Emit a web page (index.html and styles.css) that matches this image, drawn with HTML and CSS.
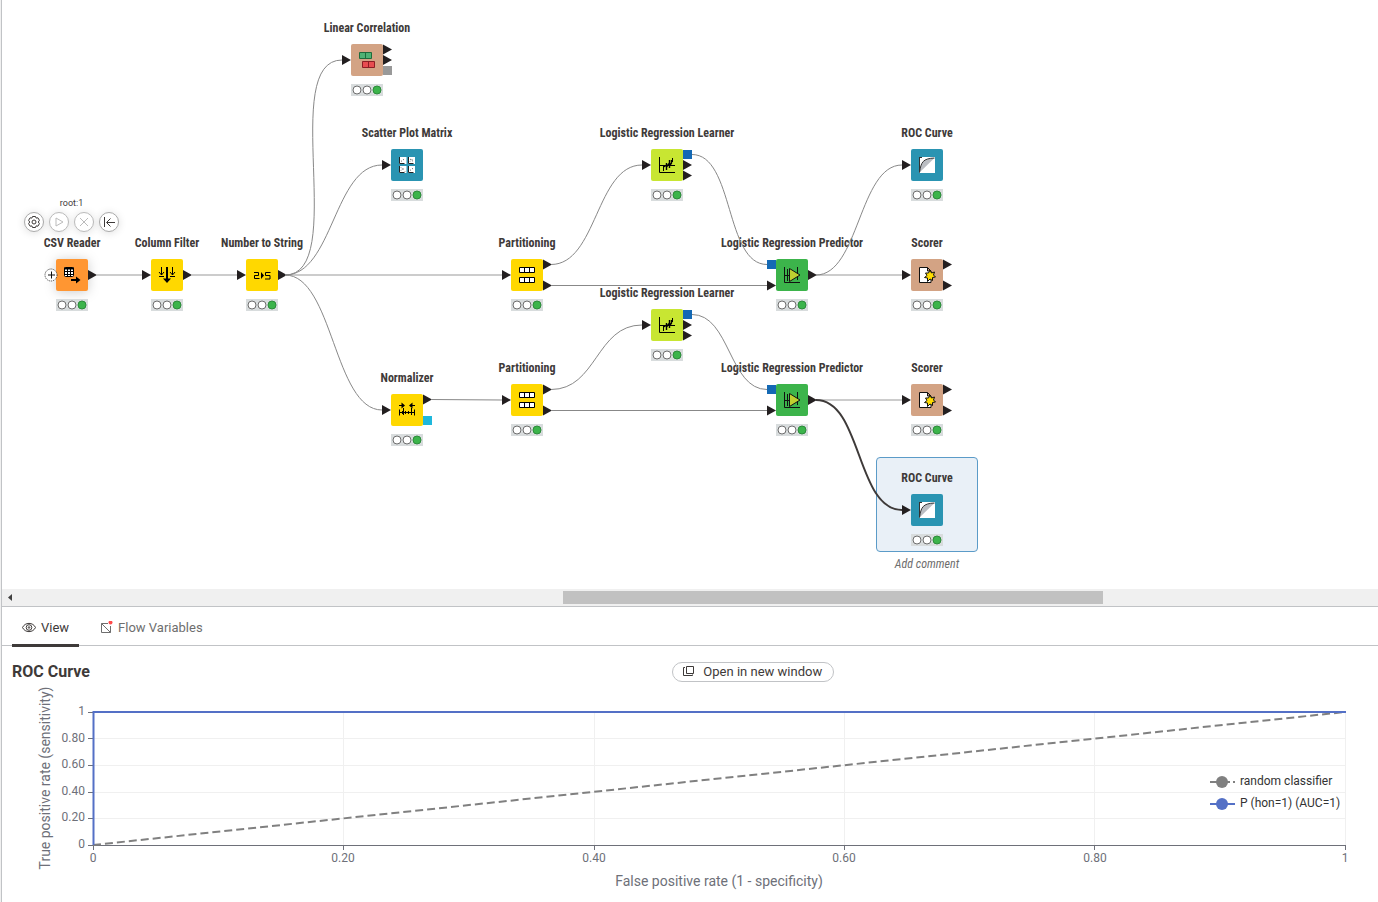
FILE: index.html
```html
<!DOCTYPE html>
<html lang="en">
<head>
<meta charset="utf-8">
<title>Workflow</title>
<link rel="stylesheet" href="styles.css">
</head>
<body>
<svg class="defs" aria-hidden="true">
  <defs>
    <path id="tri" d="M0 -5L9 0L0 5z" fill="#231f20"/>
    <rect id="sq" y="-5" width="9" height="9"/>
    <g id="lights">
      <rect width="32" height="12" fill="#d8dcdd"/>
      <g fill="#fff" stroke="#6e6e6e"><circle cx="6" cy="6" r="4"/><circle cx="16" cy="6" r="4"/><circle cx="26" cy="6" r="4" fill="#3cb44b" stroke="#2c8a3a"/></g>
    </g>
    <g id="i-csv" fill="none" stroke="#000">
      <rect x="8.5" y="8.5" width="9" height="9" rx="1" fill="#fff"/><path d="M8 9.500h10" stroke-width="2"/><path d="M8 12.500h10M8 15.500h10M11.500 10v8M14.500 10v8"/><path d="M15 21h7" stroke-width="2"/><path d="M20 17.500l4.500 3.500l-4.500 3.500z" fill="#000" stroke="none"/>
    </g>
    <g id="i-filter" fill="none" stroke="#000"><path d="M10.500 8v8M8 13l2.500 3l2.500-3M8 17.500h5M21.500 8v8M19 13l2.500 3l2.500-3M19 17.500h5"/><path d="M16 8v13" stroke-width="2"/><path d="M12 19.500l4 4.500l4-4.500z" fill="#000" stroke="none"/></g>
    <g id="i-string" fill="none" stroke="#000"><path d="M8 13.500h4.500v3h-4v3h5M24.500 13.500h-5v3h4.500v3.500h-5"/><path d="M15 13l3 3.500l-3 3.500z" fill="#000" stroke="none"/></g>
    <g id="i-part" fill="#fff" stroke="#000"><path d="M8.500 8.500h15v5h-15zM8.500 18.500h15v5h-15zM13.500 8.500v5M18.500 8.500v5M13.500 18.500v5M18.500 18.500v5"/></g>
    <g id="i-corr"><path fill="#4fb274" stroke="#1f6b3c" d="M8.500 8.500h12v6h-12zM14.500 8.500v6"/><path fill="#e84d50" stroke="#8d1f24" d="M11.500 17.500h12v6h-12zM17.500 17.500v6"/></g>
    <g id="i-scatter"><path fill="#fff" d="M8 8h7.500v7H8zM17 8h7v7h-7zM8 17h7.500v7H8zM17 17h7v7h-7z"/><path fill="none" stroke="#222" d="M8.500 8v6.500h5M17.500 8v6.500h5M8.500 17v6.500h5M17.500 17v6.500h5"/><path fill="none" stroke="#555" stroke-dasharray="1 1.500" d="M10 12.500l4-3M19 10l4 3M19 12.500l3-3M10 18.500l4 4M10 21.500l3-3M19 21.500l4-3"/></g>
    <g id="i-norm" fill="none" stroke="#000"><path d="M8 11.500h4M20 11.500h4M8.500 15.500v6M23.500 15.500v6M8 18.500h16M11.500 17v3M14.500 17v3M17.500 17v3M12.500 14v7M20.500 14v7"/><path d="M10.500 8.500l3.500 3l-3.500 3zM21.500 8.500l-3.500 3l3.500 3z" fill="#000" stroke="none"/></g>
    <g id="i-learn" fill="none" stroke="#000"><path d="M8.500 8v15.500h15.500M8 16.500h16M12.500 16v6M21.500 9v4"/><path d="M15.500 14v7M18.500 11v8M12.500 18l3-2M15.500 18l3-4M18.500 17l2-3v-3" stroke-width="1.400"/></g>
    <g id="i-pred" fill="none" stroke="#111"><path d="M8.500 8v15.500h15.500M8 16.500h5M11.500 10v12M21.500 8v13"/><path d="M13.500 9.500v13l10.500-6.500z" fill="#c0d030"/></g>
    <g id="i-roc"><path fill="#fff" d="M8 8h16v16H8z"/><path fill="#babdc2" d="M8.500 23.500C10 13 12 9.500 23.500 9z"/><path fill="none" stroke="#333" d="M8.500 8v15.500M8.500 23.500C10 13 12 9.500 23.500 9M8 8.500h3"/></g>
    <g id="i-score"><path fill="#fff" stroke="#111" d="M8.500 8.500h8l3.500 3.500v11.500h-11.500zM16.500 8.500v3.500h3.500"/><path fill="#ffdc00" stroke="#111" d="M19 11l1.500 3l3-1l-1 3l2 2l-3 .5v3l-2.500-1.500l-2.500 2.500v-3.500l-3-.5l2.500-2l-1.500-2.500h3z"/></g>
  </defs>
</svg>

<main class="app">
  <section class="canvas" aria-label="Workflow canvas">
    <div class="selection"></div>

    <article class="node" style="left:349px;top:20px"><h3>Linear Correlation</h3><svg><rect width="32" height="32" rx="2" fill="#d3a384"/><use href="#i-corr"/><use href="#tri" x="-9" y="16"/><use href="#tri" x="32" y="5.500"/><use href="#tri" x="32" y="16"/><use href="#sq" x="32" y="27" fill="#999"/><use href="#lights" y="40"/></svg></article>
    <article class="node" style="left:389px;top:125px"><h3>Scatter Plot Matrix</h3><svg><rect width="32" height="32" rx="2" fill="#2a94b2"/><use href="#i-scatter"/><use href="#tri" x="-9" y="16"/><use href="#lights" y="40"/></svg></article>
    <article class="node hovered" style="left:54px;top:235px"><h3>CSV Reader</h3><svg><rect class="box" width="32" height="32" rx="2" fill="#ff9632"/><use href="#i-csv"/><circle cx="-5" cy="16" r="6" fill="#fff" stroke="#333" stroke-dasharray="1 1"/><path d="M-8 16h7M-4.500 12.500v7" stroke="#111"/><use href="#tri" x="32" y="16"/><use href="#lights" y="40"/></svg></article>
    <article class="node" style="left:149px;top:235px"><h3>Column Filter</h3><svg><rect width="32" height="32" rx="2" fill="#ffd800"/><use href="#i-filter"/><use href="#tri" x="-9" y="16"/><use href="#tri" x="32" y="16"/><use href="#lights" y="40"/></svg></article>
    <article class="node" style="left:244px;top:235px"><h3>Number to String</h3><svg><rect width="32" height="32" rx="2" fill="#ffd800"/><use href="#i-string"/><use href="#tri" x="-9" y="16"/><use href="#tri" x="32" y="16"/><use href="#lights" y="40"/></svg></article>
    <article class="node" style="left:509px;top:235px"><h3>Partitioning</h3><svg><rect width="32" height="32" rx="2" fill="#ffd800"/><use href="#i-part"/><use href="#tri" x="-9" y="16"/><use href="#tri" x="32" y="5.500"/><use href="#tri" x="32" y="26.500"/><use href="#lights" y="40"/></svg></article>
    <article class="node" style="left:649px;top:125px"><h3>Logistic Regression Learner</h3><svg><rect width="32" height="32" rx="2" fill="#c8e632"/><use href="#i-learn"/><use href="#tri" x="-9" y="16"/><use href="#sq" x="32" y="6" fill="#1469b4"/><use href="#tri" x="32" y="16"/><use href="#tri" x="32" y="26.500"/><use href="#lights" y="40"/></svg></article>
    <article class="node" style="left:774px;top:235px"><h3>Logistic Regression Predictor</h3><svg><rect width="32" height="32" rx="2" fill="#3cb44b"/><use href="#i-pred"/><use href="#sq" x="-9" y="6" fill="#1469b4"/><use href="#tri" x="-9" y="26.500"/><use href="#tri" x="32" y="16"/><use href="#lights" y="40"/></svg></article>
    <article class="node" style="left:909px;top:125px"><h3>ROC Curve</h3><svg><rect width="32" height="32" rx="2" fill="#2a94b2"/><use href="#i-roc"/><use href="#tri" x="-9" y="16"/><use href="#lights" y="40"/></svg></article>
    <article class="node" style="left:909px;top:235px"><h3>Scorer</h3><svg><rect width="32" height="32" rx="2" fill="#d3a384"/><use href="#i-score"/><use href="#tri" x="-9" y="16"/><use href="#tri" x="32" y="5.500"/><use href="#tri" x="32" y="26.500"/><use href="#lights" y="40"/></svg></article>
    <article class="node" style="left:389px;top:370px"><h3>Normalizer</h3><svg><rect width="32" height="32" rx="2" fill="#ffd800"/><use href="#i-norm"/><use href="#tri" x="-9" y="16"/><use href="#tri" x="32" y="5.500"/><use href="#sq" x="32" y="27" fill="#1fb8dc"/><use href="#lights" y="40"/></svg></article>
    <article class="node" style="left:509px;top:360px"><h3>Partitioning</h3><svg><rect width="32" height="32" rx="2" fill="#ffd800"/><use href="#i-part"/><use href="#tri" x="-9" y="16"/><use href="#tri" x="32" y="5.500"/><use href="#tri" x="32" y="26.500"/><use href="#lights" y="40"/></svg></article>
    <article class="node" style="left:649px;top:285px"><h3>Logistic Regression Learner</h3><svg><rect width="32" height="32" rx="2" fill="#c8e632"/><use href="#i-learn"/><use href="#tri" x="-9" y="16"/><use href="#sq" x="32" y="6" fill="#1469b4"/><use href="#tri" x="32" y="16"/><use href="#tri" x="32" y="26.500"/><use href="#lights" y="40"/></svg></article>
    <article class="node" style="left:774px;top:360px"><h3>Logistic Regression Predictor</h3><svg><rect width="32" height="32" rx="2" fill="#3cb44b"/><use href="#i-pred"/><use href="#sq" x="-9" y="6" fill="#1469b4"/><use href="#tri" x="-9" y="26.500"/><use href="#tri" x="32" y="16"/><use href="#lights" y="40"/></svg></article>
    <article class="node" style="left:909px;top:360px"><h3>Scorer</h3><svg><rect width="32" height="32" rx="2" fill="#d3a384"/><use href="#i-score"/><use href="#tri" x="-9" y="16"/><use href="#tri" x="32" y="5.500"/><use href="#tri" x="32" y="26.500"/><use href="#lights" y="40"/></svg></article>
    <article class="node" style="left:909px;top:470px"><h3>ROC Curve</h3><svg><rect width="32" height="32" rx="2" fill="#2a94b2"/><use href="#i-roc"/><use href="#tri" x="-9" y="16"/><use href="#lights" y="40"/></svg><p class="comment">Add comment</p></article>

    <svg class="edges" viewBox="2 0 1376 589" aria-hidden="true">
      <path class="soft" d="M97 275H142M192 275H237M285 275H502M816 275H902M816 400H902"/>
      <path d="M285 275C349 275 278 60 342 60"/>
      <path d="M285 275C333 275 334 165 382 165"/>
      <path d="M285 275C333 275 334 410 382 410"/>
      <path d="M551 264.500C597 264.500 596 165 642 165"/>
      <path d="M551 285.500H767M551 410.500H767"/>
      <path d="M692 154.500C734 154.500 725 264.500 767 264.500"/>
      <path d="M816 275C859 275 859 165 902 165"/>
      <path d="M431 399.500L502 400"/>
      <path d="M551 389.500C597 389.500 596 325 642 325"/>
      <path d="M692 314.500C730 314.500 729 389.500 767 389.500"/>
      <path class="active" d="M816 400C862 400 856 510 902 510"/>
    </svg>

    <div class="actions">
      <span>root:1</span>
      <div class="action-row">
        <button aria-label="Configure"><svg viewBox="0 0 18 18"><path d="M7.500 3.500h3l.6 1.600l1.800-.3l1.500 2.500l-1.100 1.700l1.100 1.700l-1.500 2.500l-1.800-.3l-.6 1.600h-3l-.6-1.600l-1.800.3l-1.500-2.500l1.100-1.700l-1.100-1.700l1.500-2.500l1.800.3z"/><circle cx="9" cy="9" r="2"/></svg></button>
        <button aria-label="Execute" disabled><svg viewBox="0 0 18 18"><path d="M6 5v8l7-4z"/></svg></button>
        <button aria-label="Cancel" disabled><svg viewBox="0 0 18 18"><path d="M5 5l8 8M13 5l-8 8"/></svg></button>
        <button aria-label="Reset"><svg viewBox="0 0 18 18"><path d="M4.500 4v10M15 9.500H7M10.500 5.500l-4 4l4 4"/></svg></button>
      </div>
    </div>
  </section>

  <div class="scrollbar" role="presentation"><svg viewBox="0 0 16 17"><path d="M10 5v7L6 8.500z" fill="#404040"/></svg><div class="thumb"></div></div>

  <section class="output">
    <div class="tabs" role="tablist">
      <button class="tab selected" role="tab" aria-selected="true"><svg viewBox="0 0 14 14"><path d="M.5 6.500C3 1 11 1 13.500 6.500C11 12 3 12 .5 6.500z"/><circle cx="7" cy="6.500" r="2.800"/><circle cx="7" cy="6.500" r=".8"/></svg>View</button>
      <button class="tab" role="tab" aria-selected="false"><svg viewBox="0 0 14 14"><path d="M9 2.500H2.500v9h9V5M2.500 2.500l9 9"/><circle cx="11.500" cy="1.500" r="2" fill="#ff4b4b" stroke="none"/></svg>Flow Variables</button>
    </div>
    <div class="view-head">
      <h2>ROC Curve</h2>
      <button class="open"><svg viewBox="0 0 14 14"><path d="M4.500 1.500h7v7h-7zM3 2.500h-1.500v8h9v-1"/></svg>Open in new window</button>
    </div>
    <svg class="chart" viewBox="2 684 1376 218" role="img" aria-label="ROC curve chart">
      <path class="grid" d="M93 712.500H1345M93 738.500H1345M93 765.500H1345M93 792.500H1345M93 818.500H1345M343.500 712V845M594.500 712V845M844.500 712V845M1094.500 712V845M1345.500 712V845"/>
      <path class="axis" d="M93 845.500H1346M93.500 845V850M343.500 845V850M594.500 845V850M844.500 845V850M1094.500 845V850M1345.500 845V850M88 712.500H93M88 738.500H93M88 765.500H93M88 792.500H93M88 818.500H93M88 845.500H93"/>
      <path class="random" d="M93 845L1345 712"/>
      <path class="roc" d="M93.500 845V712H1346"/>
      <g class="ticks end"><text x="85" y="715">1</text><text x="85" y="742">0.80</text><text x="85" y="768">0.60</text><text x="85" y="795">0.40</text><text x="85" y="821">0.20</text><text x="85" y="848">0</text></g>
      <g class="ticks mid"><text x="93" y="862">0</text><text x="343" y="862">0.20</text><text x="594" y="862">0.40</text><text x="844" y="862">0.60</text><text x="1095" y="862">0.80</text><text x="1345" y="862">1</text></g>
      <text class="name" x="719" y="886">False positive rate (1 - specificity)</text>
      <text class="name" transform="translate(50 778) rotate(-90)">True positive rate (sensitivity)</text>
      <path d="M1210 782H1230M1233 782H1235" stroke="#808080" stroke-width="2"/><circle cx="1222" cy="782" r="6" fill="#808080"/>
      <path d="M1210 804H1235" stroke="#5470c6" stroke-width="2"/><circle cx="1222" cy="804" r="6" fill="#5470c6"/>
      <g class="legend"><text x="1240" y="785">random classifier</text><text x="1240" y="807">P (hon=1) (AUC=1)</text></g>
    </svg>
  </section>
</main>
</body>
</html>
```

FILE: styles.css
```css
* { box-sizing: border-box; }
body { margin: 0; padding-left: 1px; background: #f0f0f0; color: #3e3a39; font: 13px/16px Roboto, sans-serif; }
button { margin: 0; padding: 0; border: 0; background: none; color: inherit; font: inherit; }
h2, h3, p { margin: 0; }
.defs { position: absolute; width: 0; height: 0; }

.app { display: flex; flex-direction: column; min-height: 100vh; border-left: 1px solid #c1c3c6; background: #fff; }

.canvas { position: relative; min-height: 589px; overflow: hidden; }
.edges { position: absolute; left: 0; top: 0; width: 1376px; height: 589px; pointer-events: none; }
.edges path { fill: none; stroke: #888; }
.edges .soft { stroke: #999; }
.edges .active { stroke: #3e3a39; stroke-width: 2; }
.selection { position: absolute; left: 874px; top: 457px; width: 102px; height: 95px; border: 1px solid #5b9bc8; border-radius: 4px; background: #e9f0f7; }

.node { position: absolute; display: flex; flex-direction: column; align-items: center; width: 32px; }
.node h3 { margin-bottom: 8px; font: bold 12px/16px "Roboto Condensed", "Liberation Sans Narrow", Roboto, sans-serif; white-space: nowrap; }
.node svg { width: 32px; height: 52px; overflow: visible; }
.node .comment { margin-top: 10px; color: #6e6e6e; font: italic 12px/16px "Roboto Condensed", "Liberation Sans Narrow", Roboto, sans-serif; white-space: nowrap; }
.hovered .box { filter: drop-shadow(0 1px 6px #0003); }

.actions { position: absolute; left: 22px; top: 195px; display: flex; flex-direction: column; align-items: center; gap: 1px; font-size: 9px; }
.action-row { display: flex; gap: 5px; }
.action-row button { width: 20px; height: 20px; border: 1px solid #aaa; border-radius: 50%; background: #fff; box-shadow: 0 1px 8px #0002; }
.action-row svg { display: block; width: 18px; height: 18px; fill: none; stroke: #3e3a39; }
.action-row button:disabled { border-color: #bbb; }
.action-row button:disabled svg { stroke: #bbb; }

.scrollbar { position: relative; display: flex; height: 18px; padding: 2px 0; border-bottom: 1px solid #c1c3c6; background: #f0f0f0; }
.scrollbar svg { position: absolute; left: 0; top: 0; width: 16px; height: 17px; }
.thumb { width: 39.2%; margin-left: 40.8%; background: #c1c1c1; }

.output { flex: 1; }
.tabs { display: flex; height: 39px; padding-left: 10px; gap: 10px; border-bottom: 1px solid #c1c3c6; }
.tab { display: flex; align-items: center; gap: 5px; height: 40px; padding: 4px 10px 0; color: #6e6e6e; border-bottom: 3px solid transparent; }
.tab.selected { color: #3e3a39; border-color: #3e3a39; }
.tab svg, .open svg { width: 14px; height: 14px; fill: none; stroke: currentColor; }
.view-head { display: grid; grid-template-columns: 48.7% auto 1fr; align-items: center; height: 38px; padding: 13px 10px 0; }
h2 { font-size: 16px; line-height: 24px; font-weight: 700; }
.open { display: flex; align-items: center; gap: 7px; height: 20px; padding: 0 11px 0 9px; border: 1px solid #c1c3c6; border-radius: 10px; }

.chart { display: block; width: 100%; height: auto; overflow: visible; font-family: Roboto, sans-serif; }
.chart path { fill: none; }
.grid { stroke: #f0f0f0; }
.axis { stroke: #6e7079; }
.random { stroke: #808080; stroke-width: 2; stroke-dasharray: 8 4; }
.roc { stroke: #5470c6; stroke-width: 2; }
.ticks { fill: #6e7079; font-size: 12px; }
.end { text-anchor: end; }
.mid, .name { text-anchor: middle; }
.name { fill: #6e7079; font-size: 14px; }
.legend { fill: #333; font-size: 12px; }
```
